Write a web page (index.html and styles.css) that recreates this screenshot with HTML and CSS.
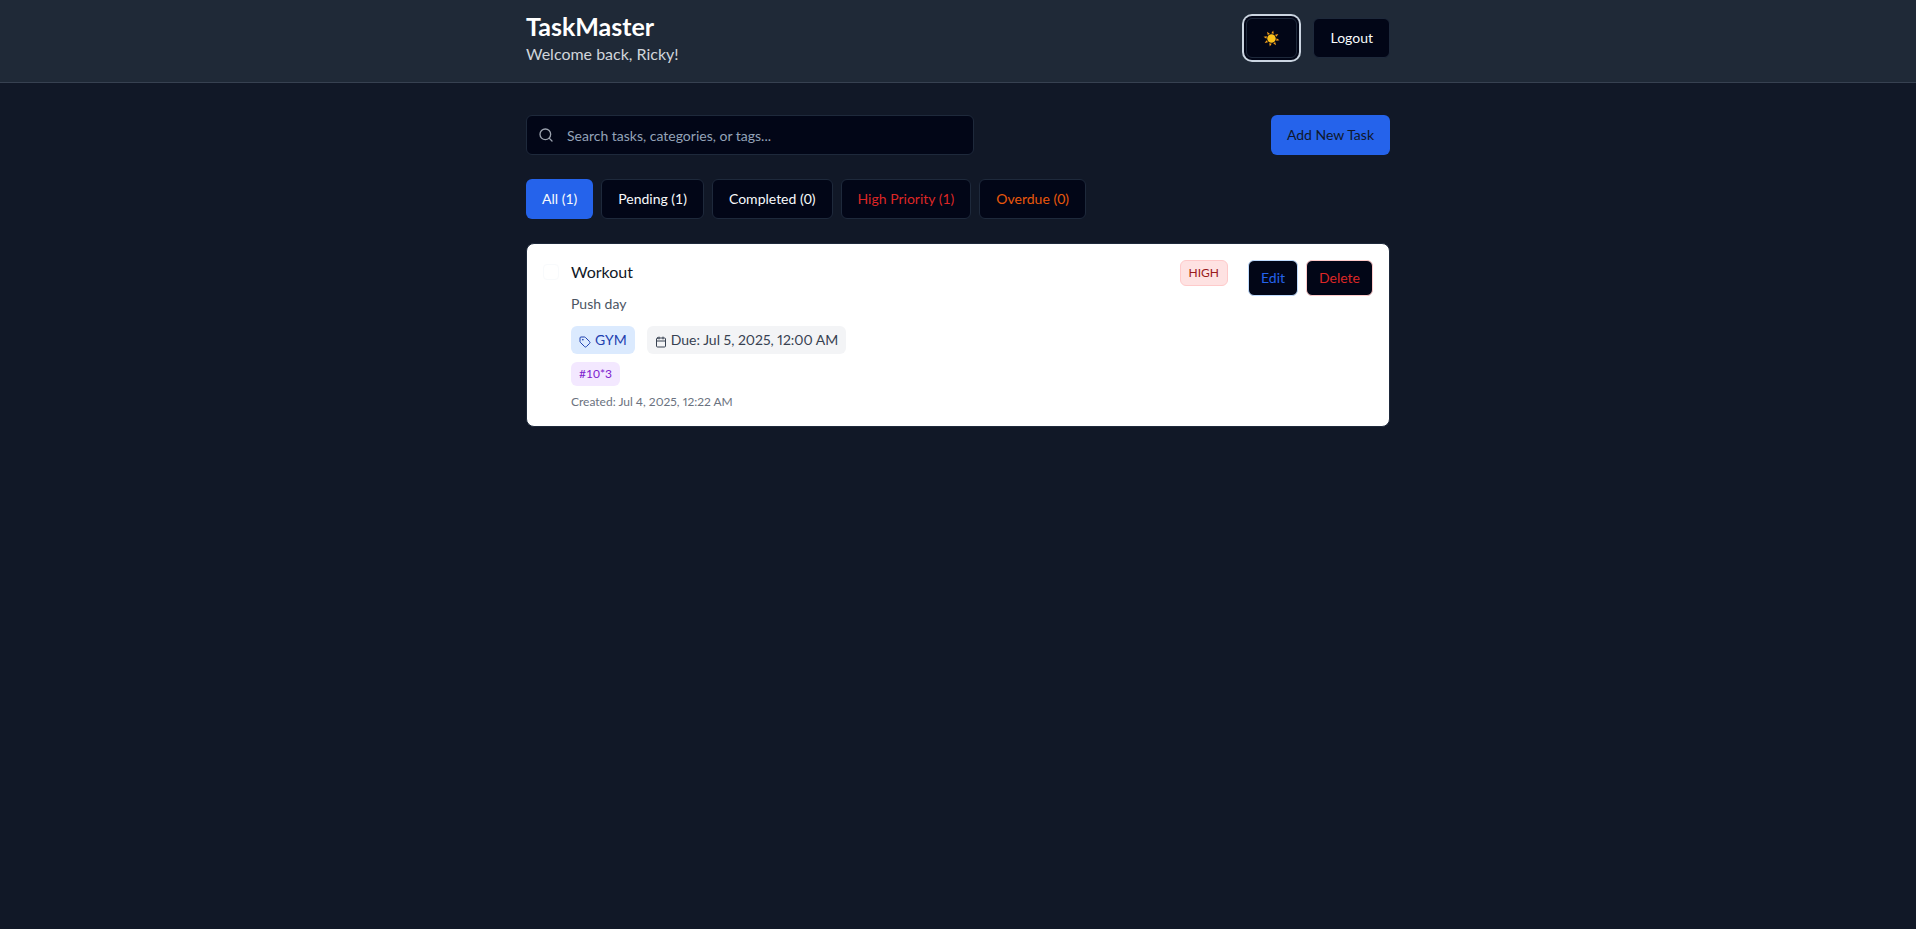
FILE: index.html
```html
<!DOCTYPE html>
<html lang="en">
<head>
<meta charset="utf-8">
<title>TaskMaster</title>
<link rel="stylesheet" href="styles.css">
</head>
<body>
<header class="topbar">
  <div class="container topbar-row">
    <div>
      <h1 class="brand">TaskMaster</h1>
      <p class="welcome">Welcome back, Ricky!</p>
    </div>
    <div class="topbar-actions">
      <button class="btn theme-toggle" type="button" aria-label="Switch to light theme">
        <svg class="sun" viewBox="0 0 18 18" aria-hidden="true">
          <g fill="#f9a01b" transform="rotate(12 9 9)">
            <path id="ray" d="M7.700 3.700 9 .4l1.300 3.300z"/>
            <use href="#ray" transform="rotate(45 9 9)"/>
            <use href="#ray" transform="rotate(90 9 9)"/>
            <use href="#ray" transform="rotate(135 9 9)"/>
            <use href="#ray" transform="rotate(180 9 9)"/>
            <use href="#ray" transform="rotate(225 9 9)"/>
            <use href="#ray" transform="rotate(270 9 9)"/>
            <use href="#ray" transform="rotate(315 9 9)"/>
          </g>
          <circle cx="9" cy="9" r="4.500" fill="#fcc21b"/>
        </svg>
      </button>
      <button class="btn" type="button">Logout</button>
    </div>
  </div>
</header>
<main class="container main">
  <div class="toolbar">
    <div class="search">
      <svg class="search-icon" viewBox="0 0 24 24" aria-hidden="true"><circle cx="11" cy="11" r="8"/><path d="m21 21-4.300-4.300"/></svg>
      <input class="search-input" type="text" placeholder="Search tasks, categories, or tags..." aria-label="Search tasks">
    </div>
    <button class="btn btn-solid btn-add" type="button">Add New Task</button>
  </div>
  <div class="filters">
    <button class="btn btn-solid" type="button">All (1)</button>
    <button class="btn" type="button">Pending (1)</button>
    <button class="btn" type="button">Completed (0)</button>
    <button class="btn text-red" type="button">High Priority (1)</button>
    <button class="btn text-orange" type="button">Overdue (0)</button>
  </div>
  <article class="task">
    <input class="task-check" type="checkbox" id="task-1">
    <div class="task-body">
      <label class="task-title" for="task-1">Workout</label>
      <p class="task-desc">Push day</p>
      <div class="meta">
        <span class="chip chip-blue">
          <svg class="chip-icon" viewBox="0 0 24 24" aria-hidden="true"><path d="M12.586 2.586A2 2 0 0 0 11.172 2H4a2 2 0 0 0-2 2v7.172a2 2 0 0 0 .586 1.414l8.704 8.704a2.426 2.426 0 0 0 3.420 0l6.580-6.580a2.426 2.426 0 0 0 0-3.420z"/><circle cx="7.500" cy="7.500" r=".5" fill="currentColor"/></svg>
          GYM
        </span>
        <span class="chip chip-gray">
          <svg class="chip-icon" viewBox="0 0 24 24" aria-hidden="true"><path d="M8 2v4M16 2v4M3 10h18"/><rect x="3" y="4" width="18" height="18" rx="2"/></svg>
          Due: Jul 5, 2025, 12:00 AM
        </span>
      </div>
      <div class="tags"><span class="tag">#10*3</span></div>
      <p class="created">Created: Jul 4, 2025, 12:22 AM</p>
    </div>
    <div class="task-side">
      <span class="priority">HIGH</span>
      <div class="task-actions">
        <button class="btn btn-small btn-edit" type="button">Edit</button>
        <button class="btn btn-small btn-delete" type="button">Delete</button>
      </div>
    </div>
  </article>
</main>
</body>
</html>
```
FILE: styles.css
```css
*, *::before, *::after { box-sizing: border-box; }
body {
  margin: 0;
  min-height: 100vh;
  background: #111827;
  color: #f8fafc;
  font-family: Lato, "Noto Sans", sans-serif;
  font-size: 14px;
  line-height: 20px;
}
h1, p { margin: 0; }
button, input { font: inherit; }

.container { width: 100%; max-width: 896px; margin: 0 auto; padding: 0 16px; }

.topbar { background: #1f2937; border-bottom: 1px solid #374151; padding: 10px 0 16px; }
.topbar-row { display: flex; align-items: center; justify-content: space-between; }
.brand { font-size: 25px; line-height: 32px; font-weight: 700; color: #fff; }
.welcome { font-size: 16px; line-height: 24px; color: #d1d5db; }
.topbar-actions { display: flex; gap: 16px; }

.btn {
  display: inline-flex;
  align-items: center;
  justify-content: center;
  height: 40px;
  padding: 0 16px;
  border: 1px solid #1e293b;
  border-radius: 6px;
  background: #020617;
  color: #f8fafc;
  white-space: nowrap;
}
.theme-toggle { box-shadow: 0 0 0 2px #020617, 0 0 0 4px #cbd5e1; }
.sun { width: 17px; height: 17px; }

.main { padding-top: 32px; padding-bottom: 32px; }
.toolbar { display: flex; align-items: center; justify-content: space-between; gap: 16px; }
.search { position: relative; flex: 1; max-width: 448px; }
.search-icon {
  position: absolute;
  top: 12px;
  left: 12px;
  width: 16px;
  height: 16px;
  fill: none;
  stroke: #9ca3af;
  stroke-width: 2;
  stroke-linecap: round;
  stroke-linejoin: round;
}
.search-input {
  display: block;
  width: 100%;
  height: 40px;
  padding: 8px 12px 8px 40px;
  border: 1px solid #1e293b;
  border-radius: 6px;
  background: #020617;
  color: #f8fafc;
}
.search-input::placeholder { color: #94a3b8; opacity: 1; }
.btn-solid { border: 0; background: #2563eb; color: #f8fafc; }
.btn-add { color: #0f172a; }

.filters { display: flex; flex-wrap: wrap; gap: 8px; margin: 24px 0; }
.text-red { color: #dc2626; }
.text-orange { color: #ea580c; }

.task {
  display: flex;
  align-items: flex-start;
  gap: 12px;
  padding: 16px;
  border: 1px solid #1e293b;
  border-radius: 8px;
  background: #fff;
}
.task-check {
  appearance: none;
  flex: none;
  width: 16px;
  height: 16px;
  margin: 4px 0 0;
  border: 1px solid #f8fafc;
  border-radius: 4px;
}
.task-body { flex: 1; min-width: 0; }
.task-title { display: block; font-size: 16px; line-height: 24px; color: #111827; }
.task-desc { margin-top: 8px; line-height: 24px; color: #4b5563; }
.meta { display: flex; flex-wrap: wrap; gap: 12px; margin-top: 10px; }
.chip { display: flex; align-items: center; gap: 4px; padding: 4px 8px; border-radius: 6px; font-feature-settings: "pnum"; }
.chip-icon {
  width: 12px;
  height: 12px;
  margin-top: 4px;
  fill: none;
  stroke: currentColor;
  stroke-width: 2;
  stroke-linecap: round;
  stroke-linejoin: round;
}
.chip-blue { background: #dbeafe; color: #1e40af; }
.chip-gray { background: #f3f4f6; color: #374151; }
.tags { display: flex; gap: 4px; margin-top: 8px; }
.tag { padding: 4px 8px; border-radius: 6px; background: #f3e8ff; color: #7e22ce; font-size: 12px; line-height: 16px; }
.created { margin-top: 8px; font-size: 12px; line-height: 16px; color: #6b7280; font-feature-settings: "pnum"; }

.task-side { display: flex; align-items: flex-start; gap: 20px; }
.priority {
  padding: 4px 8px;
  border: 1px solid #fecaca;
  border-radius: 6px;
  background: #fee2e2;
  color: #991b1b;
  font-size: 12px;
  line-height: 16px;
}
.task-actions { display: flex; gap: 8px; }
.btn-small { height: 36px; padding: 0 12px; }
.btn-edit { border-color: #bfdbfe; color: #2563eb; }
.btn-delete { border-color: #fecaca; color: #dc2626; }
```
